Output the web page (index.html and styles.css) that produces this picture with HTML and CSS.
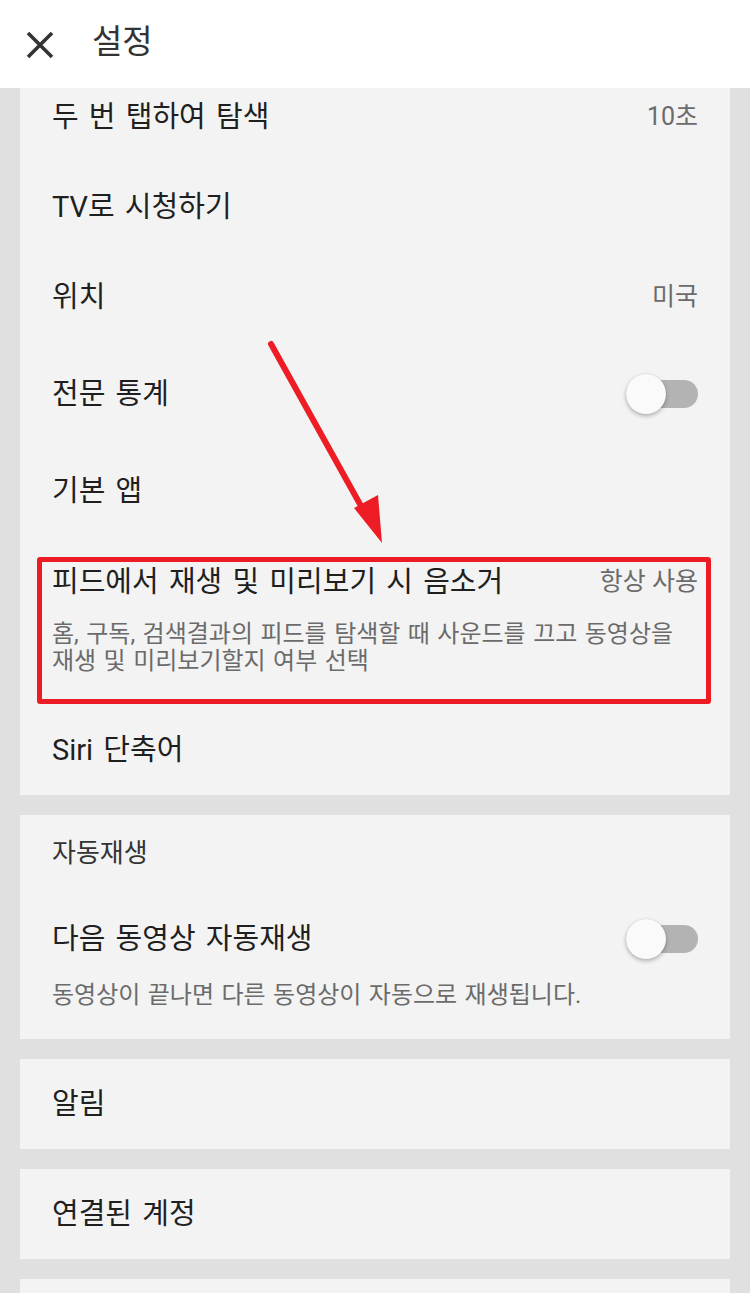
FILE: index.html
```html
<!DOCTYPE html>
<html lang="ko">
<head>
<meta charset="utf-8">
<title>설정</title>
<link rel="stylesheet" href="styles.css">
</head>
<body>
<header class="topbar">
  <svg class="close-icon" width="28" height="28" viewBox="0 0 28 28" aria-hidden="true">
    <path d="M2 2 L26 26 M26 2 L2 26" stroke="#333" stroke-width="3.6" stroke-linecap="butt" fill="none"/>
  </svg>
  <h1 class="title">설정</h1>
</header>
<main class="content">
  <section class="card card-general">
    <div class="row row-first"><span class="label">두 번 탭하여 탐색</span><span class="value">10초</span></div>
    <div class="row"><span class="label">TV로 시청하기</span></div>
    <div class="row"><span class="label">위치</span><span class="value">미국</span></div>
    <div class="row row-toggle"><span class="label">전문 통계</span><span class="toggle"><span class="knob"></span></span></div>
    <div class="row"><span class="label">기본 앱</span></div>
    <div class="row-detail row-feed">
      <div class="detail-head"><span class="label">피드에서 재생 및 미리보기 시 음소거</span><span class="value">항상 사용</span></div>
      <p class="desc">홈, 구독, 검색결과의 피드를 탐색할 때 사운드를 끄고 동영상을 재생 및 미리보기할지 여부 선택</p>
      <div class="highlight-box"></div>
    </div>
    <div class="row"><span class="label">Siri 단축어</span></div>
    <svg class="annot-arrow" width="130" height="220" viewBox="0 0 130 220" aria-hidden="true">
      <line x1="21" y1="14" x2="116" y2="185" stroke="#ee1d25" stroke-width="6" stroke-linecap="round"/>
      <polygon points="132,213 104,178 128,165" fill="#ee1d25"/>
    </svg>
  </section>

  <section class="card">
    <div class="section-head">자동재생</div>
    <div class="row-detail row-autoplay">
      <div class="detail-head"><span class="label">다음 동영상 자동재생</span><span class="toggle"><span class="knob"></span></span></div>
      <p class="desc">동영상이 끝나면 다른 동영상이 자동으로 재생됩니다.</p>
    </div>
  </section>

  <section class="card">
    <div class="row"><span class="label">알림</span></div>
  </section>

  <section class="card">
    <div class="row"><span class="label">연결된 계정</span></div>
  </section>

  <section class="card card-tail"></section>
</main>
</body>
</html>
```

FILE: styles.css
```css
* { box-sizing: border-box; }

html, body {
  margin: 0;
  padding: 0;
}

body {
  width: 750px;
  height: 1293px;
  overflow: hidden;
  background: #e0e0e0;
  font-family: Roboto, "Noto Sans CJK KR", "Noto Sans", sans-serif;
  color: #212121;
}

.topbar {
  height: 88px;
  background: #ffffff;
  display: flex;
  align-items: center;
  padding-left: 26px;
  gap: 38px;
}

.close-icon {
  flex: none;
  margin-top: 1px;
}

.title {
  margin: 0;
  font-size: 33px;
  font-weight: 400;
  color: #333333;
  line-height: 40px;
  margin-top: -4px;
}

.content {
  display: flex;
  flex-direction: column;
  gap: 20px;
  padding: 0 20px;
}

.card {
  background: #f3f3f3;
  position: relative;
}

.row {
  height: 90px;
  display: flex;
  align-items: center;
  justify-content: space-between;
  padding: 0 32px;
}

.row-first {
  height: 74px;
  align-items: flex-start;
  padding-top: 12px;
}

.row-toggle {
  height: 104px;
}

.label {
  font-size: 29px;
  line-height: 34px;
  word-spacing: 3px;
  color: #1f1f1f;
}

.value {
  font-size: 25px;
  line-height: 34px;
  color: #6b6b6b;
}

.row-detail {
  position: relative;
  padding: 29px 32px 30px;
}

.row-feed {
  height: 169px;
}

.detail-head {
  display: flex;
  align-items: center;
  justify-content: space-between;
}

.desc {
  margin: 22px 0 0;
  font-size: 24px;
  line-height: 27px;
  word-spacing: 1.5px;
  color: #6b6b6b;
}

.highlight-box {
  position: absolute;
  left: 17px;
  right: 19px;
  top: 21px;
  bottom: 1px;
  border: 5px solid #ed1c24;
  border-radius: 3px;
  pointer-events: none;
}

.annot-arrow {
  position: absolute;
  left: 230px;
  top: 242px;
  overflow: visible;
}

.section-head {
  height: 70px;
  display: flex;
  align-items: center;
  padding: 0 32px;
  font-size: 26px;
  color: #333333;
}

.row-autoplay {
  padding-top: 37px;
  height: 154px;
}

.row-autoplay .desc {
  margin-top: 26px;
}

.toggle {
  position: relative;
  width: 72px;
  height: 28px;
  flex: none;
  border-radius: 14px;
  background: #b3b3b3;
}

.toggle .knob {
  position: absolute;
  left: 0;
  top: -6px;
  width: 40px;
  height: 40px;
  border-radius: 50%;
  background: #fafafa;
  box-shadow: 0 2px 4px rgba(0, 0, 0, 0.28), 0 0 1px rgba(0, 0, 0, 0.15);
}

.card-tail {
  height: 40px;
}
```
